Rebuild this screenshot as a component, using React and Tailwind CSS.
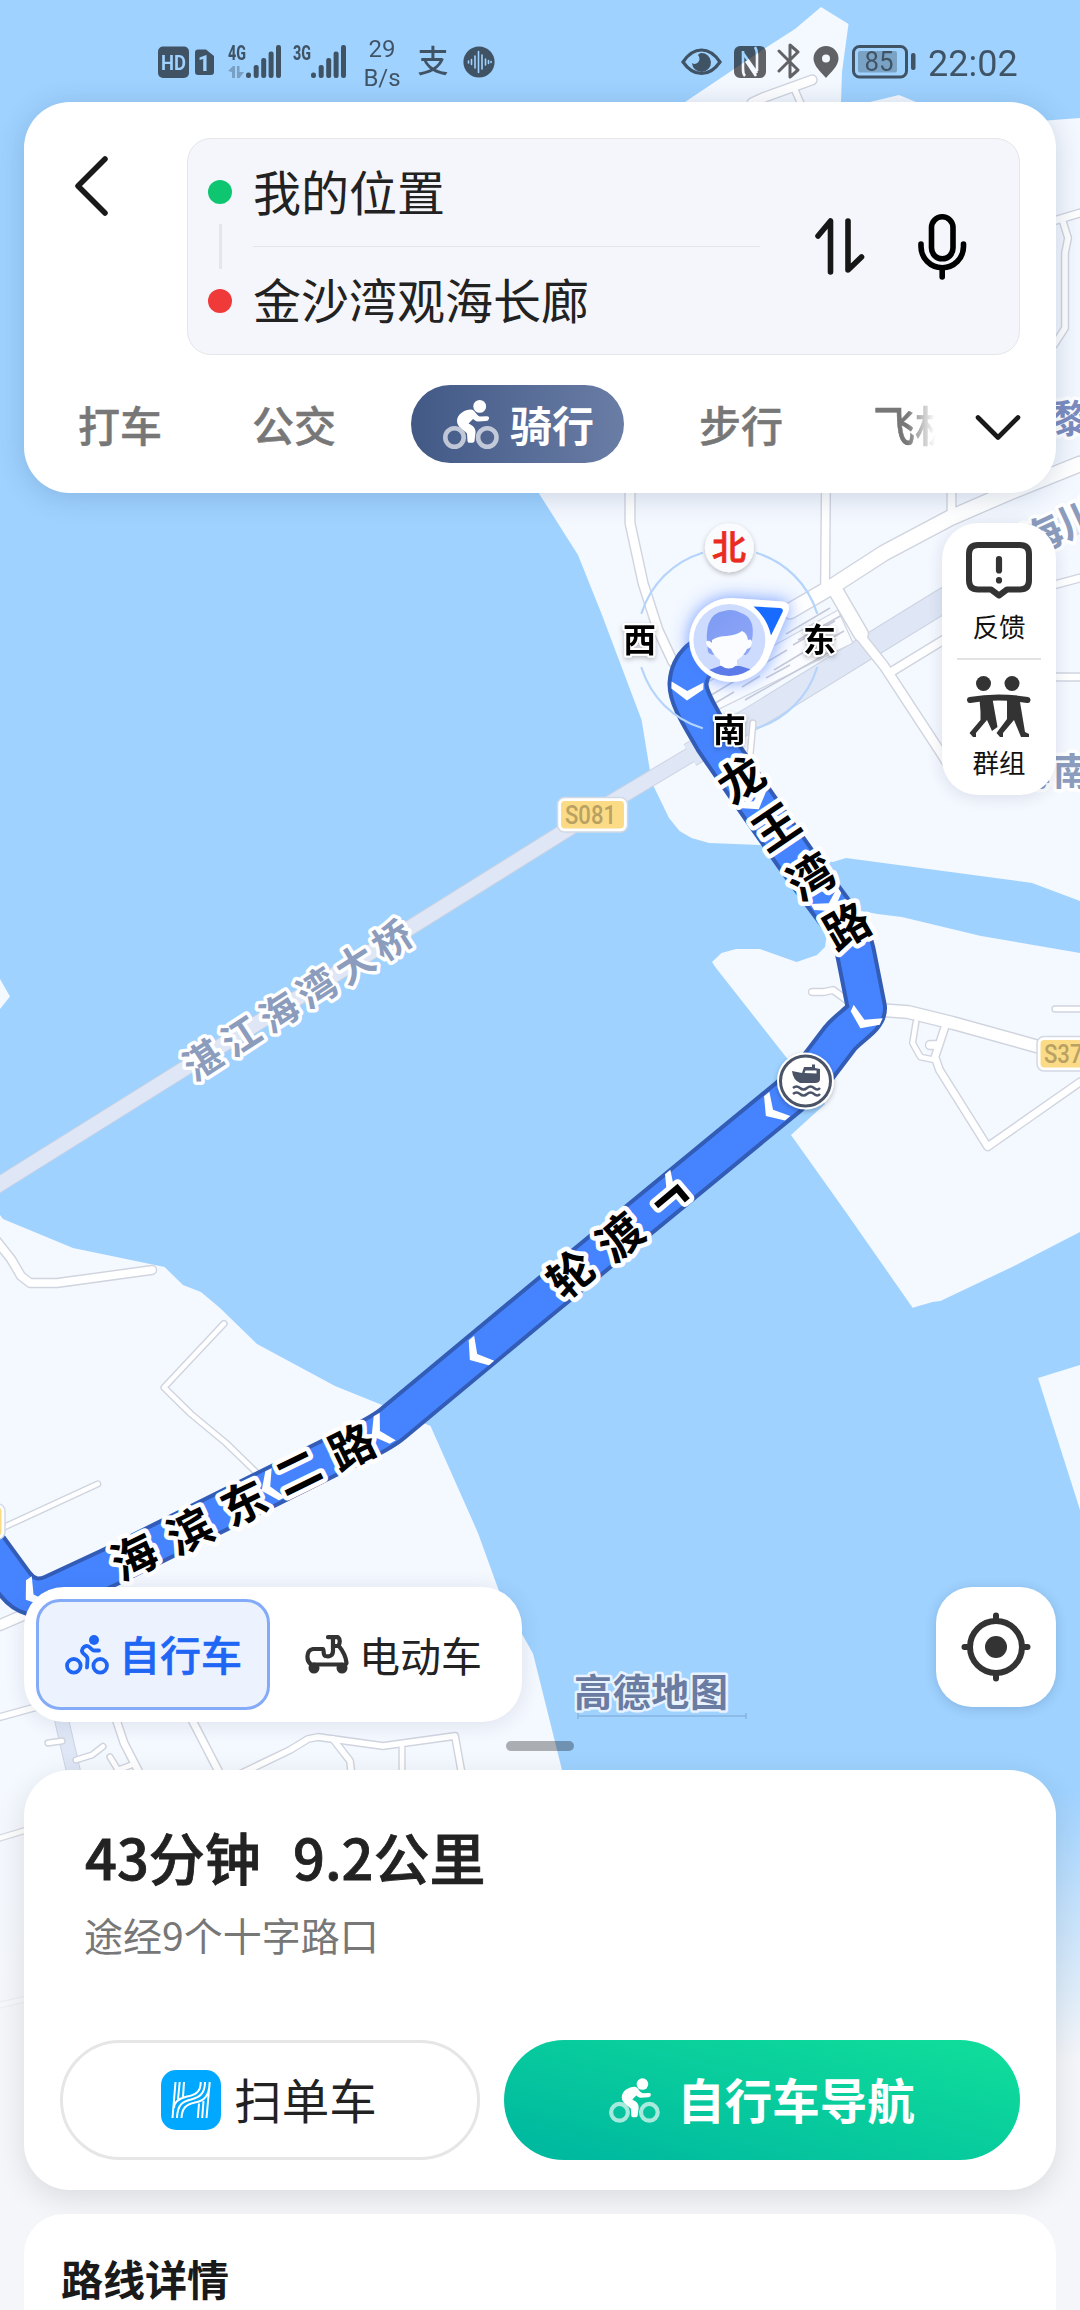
import React from "react";

const CJK = '"Noto Sans CJK SC", "Noto Sans", sans-serif';

const ROADS = [
  { w: 10, p: "752,103 765,97 812,80" },
  { w: 7, p: "794,88 801,104" },
  { w: 8, p: "1050,222 1080,213" },
  { w: 7, p: "1063,222 1068,238 1065,253 1065,328 1054,345" },
  { w: 10, p: "630,480 630,523 643,583 658,630 673,662" },
  { w: 9, p: "826,480 825,590" },
  { w: 9, p: "951.5,480 951.5,518" },
  { w: 16, p: "790,611 833,586 884,553 950,518 1010,492 1080,464" },
  { w: 15, p: "833,586 861,634" },
  { w: 10, p: "857,632 884,666 941,753 950,767" },
  { w: 9, p: "891,672 950,636" },
  { w: 8, p: "1050,586 1080,578" },
  { w: 8, p: "1050,677 1080,677" },
  { w: 6, p: "753,723 750,756" },
  { w: 13, p: "880,1010 908,1012 953,1023 1050,1050" },
  { w: 7, p: "812,992 824,992 833,990 848,1001" },
  { w: 6, p: "916,1022 912.6,1043 920.5,1057 935,1060" },
  { w: 9, p: "930,1045 938,1045" },
  { w: 8, p: "944.6,1028 935,1057 939.5,1070 987.7,1146.7 1080,1082" },
  { w: 6, p: "1055,1009 1080,1009" },
  { w: 9, p: "-4,1240 11,1259 21,1276 30,1283 57,1283 152,1270" },
  { w: 6, p: "224,1323.6 164,1387.5 191,1414 226,1443 260,1476" },
  { w: 6, p: "97.6,1484 0,1529" },
  { w: 11, p: "0,1625 35,1610" },
  { w: 7, p: "0,1717 40,1706" },
  { w: 8, p: "115,1716 124,1743 142,1778" },
  { w: 8, p: "190,1716 222,1778" },
  { w: 7, p: "240,1774 290,1750 308,1739 318,1737 383,1746 455,1736 462,1775" },
  { w: 7, p: "333,1739 350,1761 352,1778" },
  { w: 6, p: "402,1747 402,1778" },
  { w: 6, p: "48,1743 62,1741" },
  { w: 6, p: "76,1760 92,1755 103,1746.5" },
  { w: 6, p: "110,1757 118,1770 134,1764" },
  { w: 6, p: "0,1838 30,1829" },
  { w: 6, p: "0,2005 30,1998" },
];

const LAND = [
  "685,102 770,45 795,29 821,7 848.5,24 842,72 841,102",
  "870,102 899,95 916,102",
  "1040,121 1080,118 1080,901 1032,883 846,858 833,862 800,858 760,845 709,843 691.5,838 679.5,831 669,818 653,785 649.5,768 641.6,720 602,615 578,555 540,495 530,478 530,300 1040,300",
  "1080,953 981,936 902,917 877.5,914 856,910 827,920 827,933 825,947 817,955 796.5,962 760,949 736,949 721.5,953 712,962 716,968 786,1057 815,1090 825,1104 791,1135 846.5,1213 912.6,1307.7 932.6,1302 940.5,1301 1012,1267 1080,1232",
  "1038,1378 1080,1365 1080,1510",
  "0,1215 3,1219 73,1248 164.6,1267 183,1285 201,1292 220,1308 257,1344 335,1386 384.6,1406 430.5,1426 478,1533 498.6,1590 522,1634 533,1653.5 562,1770 575,1820 575,2310 0,2310",
  "0,979 10,996.5 0,1009",
];

const ROUTE =
  "M727 647 C704 651 689 664 688 684 C688 699 701 718 714 741 L758 805 L800 865 L834 911 C848 930 853 937 857 960 L866.5 1008 C867 1018 850 1026 840 1038 L821 1063 C812 1076 800 1087 787 1098 L540 1301 L392 1424 C380 1434 360 1443 345 1450 L110 1567 L52 1594 C38 1600 25 1597 15 1584 L-20 1536";

const CHEVRONS = [
  [687, 699, 92], [758, 808, 58], [833, 910, 58], [861, 1027, 115],
  [767, 1115, 139], [668, 1193, 139], [471, 1359, 141], [373, 1435, 150], [263, 1490, 155], [27, 1599, 145],
];

const LABELS = [
  { t: "龙", x: 741, y: 779, r: -34 }, { t: "王", x: 776, y: 827, r: -34 },
  { t: "湾", x: 811, y: 877, r: -32 }, { t: "路", x: 847, y: 926, r: -30 },
  { t: "轮", x: 571, y: 1274, r: -40 }, { t: "渡", x: 620, y: 1237, r: -40 },
  { t: "¬", x: 668, y: 1196, r: -40, s: 60 },
  { t: "海", x: 134, y: 1557, r: -26 }, { t: "滨", x: 190, y: 1531, r: -26 },
  { t: "东", x: 244, y: 1503, r: -26 }, { t: "二", x: 298, y: 1472, r: -26 },
  { t: "路", x: 352, y: 1447, r: -26 },
];

const BRIDGE = [
  { t: "湛", x: 203, y: 1060, r: -33 }, { t: "江", x: 241, y: 1036, r: -33 },
  { t: "海", x: 279, y: 1012, r: -33 }, { t: "湾", x: 317, y: 988, r: -33 },
  { t: "大", x: 355, y: 964, r: -33 }, { t: "桥", x: 392, y: 940, r: -33 },
  { t: "海", x: 1042, y: 535, r: -25, s: 40 }, { t: "川", x: 1078, y: 518, r: -25, s: 40 },
  { t: "南", x: 1072, y: 771, r: 0 }, { t: "海", x: 1032, y: 771, r: 0 }, { t: "黎", x: 1071, y: 418, r: 0, c: "#7c8cc0" },
];

function MapText({ t, x, y, r, size, fill, halo }) {
  return (
    <text
      transform={`translate(${x} ${y}) rotate(${r})`}
      y={size * 0.37}
      textAnchor="middle"
      fontFamily={CJK}
      fontSize={size}
      fontWeight="700"
      fill={fill}
      stroke="#fff"
      strokeWidth={halo}
      strokeLinejoin="round"
      paintOrder="stroke"
    >
      {t}
    </text>
  );
}

function RoadBadge({ x, y, w, h, t, tx, len }) {
  return (
    <g>
      <rect x={x} y={y} width={w} height={h} rx="7" fill="#fff" stroke="#d2d9e4" strokeWidth="1.5" />
      <rect x={x + 3.5} y={y + 3.5} width={w - 7} height={h - 7} rx="4" fill="#fbdb86" />
      {t && (
        <text x={tx} y={y + 26} fontFamily="Roboto, sans-serif" fontSize="25" fontWeight="500" fill="#b8a163" textLength={len} lengthAdjust="spacingAndGlyphs">
          {t}
        </text>
      )}
    </g>
  );
}

function MapCanvas() {
  const dirs = [
    { t: "西", x: 639.5, y: 639 },
    { t: "东", x: 819.6, y: 639 },
    { t: "南", x: 729.4, y: 729 },
  ];
  return (
    <svg className="absolute inset-0" width="1080" height="2310" viewBox="0 0 1080 2310">
      <defs>
        <linearGradient id="fade" x1="0" y1="0" x2="0" y2="1">
          <stop offset="0" stopColor="#f4f6f9" stopOpacity="0" />
          <stop offset="1" stopColor="#f4f6f9" />
        </linearGradient>
        <linearGradient id="hair" x1="0" y1="0" x2="1" y2="1">
          <stop offset="0" stopColor="#7d9bf3" />
          <stop offset="1" stopColor="#8fa6f8" />
        </linearGradient>
        <filter id="glow" x="-60%" y="-60%" width="220%" height="220%">
          <feDropShadow dx="0" dy="0" stdDeviation="9" floodColor="#3f78ff" floodOpacity="0.75" />
        </filter>
        <filter id="soft" x="-40%" y="-40%" width="180%" height="180%">
          <feDropShadow dx="0" dy="2" stdDeviation="2.5" floodColor="#000" floodOpacity="0.25" />
        </filter>
        <clipPath id="face"><circle cx="729.4" cy="640" r="36" /></clipPath>
      </defs>
      <rect width="1080" height="2310" fill="#9fd2ff" />
      {LAND.map((p) => <polygon key={p} points={p} fill="#f4f8ff" />)}

      <g fill="none" strokeLinecap="butt">
        <polyline points="-5,1187 600,809 697,751" stroke="#ccd3e3" strokeWidth="16" />
        <polyline points="690,755 756,716 941,602 1085,516" stroke="#ccd3e3" strokeWidth="25" />
        <polyline points="57,1700 75,1778" stroke="#ccd3e3" strokeWidth="15" />
        <polyline points="-5,1187 600,809 697,751" stroke="#dfe7f6" strokeWidth="14" />
        <polyline points="690,755 756,716 941,602 1085,516" stroke="#dfe7f6" strokeWidth="23" />
        <polyline points="57,1700 75,1778" stroke="#dfe7f6" strokeWidth="13" />
      </g>
      <path d="M690 692L838 610L853 643L713 712Z" fill="#fbfcff" stroke="#d0d4e1" strokeWidth="1.2" />
      <g stroke="#c6cad8" strokeWidth="1.5" fill="none">
        <path d="M708 697l30-18M745 675l42-25M793 645l42-24M712 705l22-13M742 687l18-11M766 678l24-13M774 670l30-18M806 656l30-17M786 634l44-26M798 640l44-25M745 700l90-51M812 649l32-18" />
      </g>
      <g fill="none" strokeLinejoin="round" strokeLinecap="round">
        {ROADS.map((r) => <polyline key={r.p} points={r.p} stroke="#d0d4df" strokeWidth={r.w + 1.4} />)}
        {ROADS.map((r) => <polyline key={r.p} points={r.p} stroke="#fff" strokeWidth={r.w - 1.4} />)}
      </g>

      <g fill="none" strokeLinejoin="round">
        <path d={ROUTE} stroke="#325cb5" strokeWidth="41" />
        <path d={ROUTE} stroke="#4684ff" strokeWidth="33" />
      </g>
      {CHEVRONS.map(([x, y, a]) => (
        <path key={`${x}`} transform={`translate(${x} ${y}) rotate(${a})`} d="M-10 -16L1.500 0L-10 16H-17L-8 0L-17 -16Z" fill="#fff" />
      ))}

      {BRIDGE.map((l) => <MapText key={`${l.x}`} {...l} size={l.s || 38} fill={l.c || "#8c9cbd"} halo={7} />)}
      {LABELS.map((l) => <MapText key={`${l.x}`} {...l} size={l.s || 45} fill="#000" halo={9} />)}

      <RoadBadge x={557.5} y={797.5} w={70} h={34.5} t="S081" tx={565} len={51} />
      <RoadBadge x={1037} y={1036.5} w={70} h={34.5} t="S373" tx={1044} len={51} />
      <RoadBadge x={-40} y={1504} w={45} h={35} />

      <g>
        <circle cx="805.5" cy="1081" r="28.5" fill="#fff" filter="url(#soft)" />
        <circle cx="805.5" cy="1081" r="25" fill="#fff" stroke="#4a5466" strokeWidth="3" />
        <path d="M792 1071L802 1073L804 1067H812V1064.5H815V1068L820 1069V1079Q820 1083 815 1083H800Q793 1080 792 1071Z" fill="#4a5466" />
        <path d="M805.5 1070.500H816.500V1073.500L804.500 1073Z" fill="#fff" />
        <path d="M793 1088q3.500-3 7 0t7 0t7 0t6 0M793 1094q3.500-3 7 0t7 0t7 0t6 0" fill="none" stroke="#4a5466" strokeWidth="2.5" />
      </g>

      <g fill="none" stroke="#b4d4fb" strokeWidth="2.2" strokeLinecap="round">
        <path d="M702 553A91.700 91.700 0 0 0 641.600 613M757 553A91.700 91.700 0 0 1 817 613M641.600 668A91.700 91.700 0 0 0 702 728M817 668A91.700 91.700 0 0 1 757 728" />
      </g>
      <g filter="url(#glow)">
        <path d="M731 598L782 601.500Q791 602.500 788.500 611L767 662A42 42 0 1 1 731 598Z" fill="#fff" />
      </g>
      <path d="M753.500 606.500L780 608Q784 608.500 782.500 612L771 635.500Q767 618 753.500 606.500Z" fill="#176bff" />
      <circle cx="729.4" cy="640" r="36" fill="#cddbfe" />
      <g clipPath="url(#face)">
        <path d="M709 670L720 666H740L753 670V680H706Z" fill="#5c7ae8" />
        <path d="M708 652Q702 614 724 611Q733 608 741 613Q756 618 752 640Q752 650 746 655L738 655H716Q710 655 708 652Z" fill="url(#hair)" />
        <path d="M712 640Q718 636 727 636Q737 635 742 631Q747 633 748 640Q752 638 752 643Q752 648 747 649Q744 656 737 660V665Q729 672 720 665V660Q714 656 711 649Q706 647 706 642Q708 639 712 643Z" fill="#fbfcff" />
      </g>
      <circle cx="729.4" cy="547.7" r="24.5" fill="#fafbfd" filter="url(#soft)" />
      <text x="729" y="560" textAnchor="middle" fontFamily={CJK} fontSize="34" fontWeight="500" fill="#ea2c20" stroke="#ea2c20" strokeWidth="0.8">北</text>
      {dirs.map((d) => (
        <text key={d.t} x={d.x} y={d.y + 12.5} textAnchor="middle" fontFamily={CJK} fontSize="33" fontWeight="700" fill="#000" stroke="#fff" strokeWidth="4" strokeLinejoin="round" paintOrder="stroke" filter="url(#soft)">{d.t}</text>
      ))}

      <text x="574" y="1706" fontFamily={CJK} fontSize="38" fontWeight="700" fill="#6b7ca3" stroke="#e8f3ff" strokeWidth="5" strokeLinejoin="round" paintOrder="stroke" textLength="154">高德地图</text>
      <path d="M578 1713v6M746 1713v6M578 1716h168" stroke="#88b4df" strokeWidth="1.500" fill="none" />

      <rect y="1790" width="1080" height="270" fill="url(#fade)" />
      <rect y="2059" width="1080" height="251" fill="#f4f6f9" />
    </svg>
  );
}

function SignalBars() {
  return (
    <svg width="35" height="34" viewBox="0 0 35 34" fill="currentColor">
      <rect x="0" y="27.500" width="5" height="5.500" rx="2.200" />
      <rect x="7.700" y="20" width="5" height="13" rx="2.200" />
      <rect x="15.200" y="13" width="5" height="20" rx="2.200" />
      <rect x="22.600" y="6.500" width="5" height="26.500" rx="2.200" />
      <rect x="30" y="0" width="5" height="33" rx="2.200" />
    </svg>
  );
}

function StatusBar() {
  return (
    <div className="flex h-[102px] shrink-0 items-start pt-[45px] pl-[158px] text-black opacity-60 font-[Roboto,'Noto_Sans_CJK_SC',sans-serif]">
      <svg width="31" height="33" viewBox="0 0 31 33" className="shrink-0">
        <mask id="hd"><rect width="31" height="33" fill="#fff" /><text x="15.500" y="25" textAnchor="middle" fontFamily="Roboto" fontWeight="700" fontSize="21" textLength="25" lengthAdjust="spacingAndGlyphs" fill="#000">HD</text></mask>
        <rect y="1.500" width="31" height="31.500" rx="5" fill="currentColor" mask="url(#hd)" />
      </svg>
      <svg width="19" height="33" viewBox="0 0 19 33" className="ml-[6px] shrink-0">
        <mask id="sim"><rect width="19" height="33" fill="#fff" /><text x="9" y="25.500" textAnchor="middle" fontFamily="Roboto" fontWeight="800" fontSize="22" fill="#000">1</text></mask>
        <path d="M3 4.500H11L19 11V27Q19 30 16 30H3Q0 30 0 27V7.500Q0 4.500 3 4.500Z" fill="currentColor" mask="url(#sim)" />
      </svg>
      <div className="ml-[14px] flex w-[53px] shrink-0 justify-between">
        <div className="w-[18px]">
          <svg width="20" height="34" viewBox="0 0 20 34" fill="currentColor">
            <text x="0" y="15" fontFamily="Roboto" fontWeight="800" fontSize="20" textLength="18" lengthAdjust="spacingAndGlyphs">4G</text>
            <path d="M0 26L5 21H7V33H4V27ZM9 21H11.500V27H16L11.500 33H9Z" opacity="0.400" />
          </svg>
        </div>
        <SignalBars />
      </div>
      <div className="ml-[12px] flex w-[53px] shrink-0 justify-between">
        <div className="w-[18px]">
          <svg width="20" height="34" viewBox="0 0 20 34" fill="currentColor">
            <text x="0" y="15" fontFamily="Roboto" fontWeight="800" fontSize="20" textLength="18" lengthAdjust="spacingAndGlyphs">3G</text>
          </svg>
        </div>
        <SignalBars />
      </div>
      <div className="-mt-[10px] ml-[16px] w-[40px] shrink-0 text-center text-[24px] leading-[28.5px]">
        <div>29</div>
        <div>B/s</div>
      </div>
      <div className="mt-[1px] ml-[13px] w-[36px] shrink-0 text-center text-[31px] leading-[32px] font-medium">支</div>
      <svg width="32" height="34" viewBox="0 0 32 34" className="ml-[12px] shrink-0">
        <mask id="wave"><rect width="32" height="34" fill="#fff" /><path d="M5.500 16v2M8.500 14.500v5M12 11v12M15.500 6.500v21M19 10v14M22.500 14v6M25.500 15.500v3M28 16.500v1" stroke="#000" strokeWidth="1.600" strokeLinecap="round" /></mask>
        <circle cx="16" cy="17" r="15.600" fill="currentColor" mask="url(#wave)" />
      </svg>
      <svg width="41" height="34" viewBox="0 0 41 34" className="ml-[186px] shrink-0">
        <path d="M2 17Q10 5 20.500 5T39 17Q31 28.500 20.500 28.500T2 17Z" fill="none" stroke="currentColor" strokeWidth="3.200" />
        <path d="M20 8A9.500 9.500 0 1 1 11 18Q14 20 17 17.500Q20 14 17 10Q18 8.500 20 8Z" fill="currentColor" />
      </svg>
      <svg width="32" height="34" viewBox="0 0 32 34" className="ml-[12px] shrink-0">
        <mask id="nfc"><rect width="32" height="34" fill="#fff" /><path d="M9 6V24Q9 29 11 31M9 8L23 28M23 26V10Q23 5 21 2M12 16L22 31" fill="none" stroke="#000" strokeWidth="2.600" /></mask>
        <rect y="1" width="32" height="32" rx="6" fill="currentColor" mask="url(#nfc)" />
      </svg>
      <svg width="24" height="38" viewBox="0 0 24 38" className="-mt-[3px] ml-[11px] shrink-0">
        <path d="M2 9L21 28L13 35V3L21 10L2 29" fill="none" stroke="currentColor" strokeWidth="3" strokeLinejoin="round" strokeLinecap="round" />
      </svg>
      <svg width="26" height="34" viewBox="0 0 26 34" className="ml-[12px] shrink-0">
        <path fillRule="evenodd" d="M13 1A12.500 12.500 0 0 1 25.500 13.500C25.500 21 18 27 13 33C8 27 .5 21 .5 13.500A12.500 12.500 0 0 1 13 1ZM13 9.500A4 4 0 1 0 13 17.500A4 4 0 1 0 13 9.500Z" fill="currentColor" />
      </svg>
      <svg width="64" height="34" viewBox="0 0 64 34" className="ml-[13px] shrink-0">
        <rect x="1.500" y="1.500" width="53" height="30.500" rx="6" fill="none" stroke="currentColor" strokeWidth="3" />
        <rect x="6" y="6" width="39" height="21.500" rx="2" fill="currentColor" opacity="0.380" />
        <rect x="59" y="8" width="4.500" height="17" rx="2" fill="currentColor" />
        <text x="27" y="26" textAnchor="middle" fontFamily="Roboto" fontSize="27" textLength="29" lengthAdjust="spacingAndGlyphs" fill="currentColor">85</text>
      </svg>
      <div className="ml-[12px] shrink-0 text-[36px] leading-[38px]">22:02</div>
    </div>
  );
}

function Cyclist({ className, wheel = "rgba(255,255,255,0.65)" }) {
  return (
    <svg viewBox="0 0 56 49" className={className}>
      <circle cx="11.500" cy="37.500" r="9.200" fill="none" stroke={wheel} strokeWidth="4.600" />
      <circle cx="44.300" cy="37.500" r="9.200" fill="none" stroke={wheel} strokeWidth="4.600" />
      <circle cx="36.700" cy="6.400" r="6.400" fill="#fff" />
      <path d="M14 21C14 14 22 9.500 28 9.500C32 9.500 33 15.500 37 16.500L44 16.300Q46.500 16.500 46 18.500Q45.500 21 43 21L35 21.500C32.500 21.300 31.500 20 30 19L25.500 23.500C31 26 33 29 32.500 33L31.500 41Q31.300 42.800 29.500 42.800H26Q24.500 42.800 24.500 41L24 33.500C20 29 14 27 14 21Z" fill="#fff" />
    </svg>
  );
}

function CyclistOutline() {
  return (
    <svg viewBox="0 0 44 40" className="h-10 w-11" fill="none" stroke="#1f66f5" strokeWidth="3.800" strokeLinecap="round" strokeLinejoin="round">
      <circle cx="8.800" cy="30.800" r="6.800" />
      <circle cx="35.200" cy="30.800" r="6.800" />
      <circle cx="29" cy="5" r="5" fill="#1f66f5" stroke="none" />
      <path d="M34 15.500H29C26 15.500 25 10.500 21.500 11C18 11.500 16 15 17.500 17.500C19 20 23 20.500 22.500 24.500L22 32.500" />
    </svg>
  );
}

function Scooter() {
  return (
    <svg viewBox="0 0 44 39" className="h-[39px] w-11" fill="none" stroke="#333" strokeWidth="4.200" strokeLinecap="round" strokeLinejoin="round">
      <path d="M23 2.200H33C35.500 4 35 8.500 33.500 10.500C38 16 41 22 41.500 28C41 30 38 30 35 29.500H6C1 26 1 15 8 14H18C19.500 16 17.500 20 20.500 21C24 22 28 21 28 16V3M33 11H29" />
      <circle cx="9" cy="33" r="5.500" fill="#333" stroke="none" />
      <circle cx="37" cy="33" r="5.500" fill="#333" stroke="none" />
    </svg>
  );
}

function HeaderCard() {
  return (
    <div className="mx-6 h-[391px] shrink-0 rounded-[46px] bg-white pt-9 shadow-[0_4px_28px_rgba(40,70,110,0.2)]">
      <div className="flex h-[217px]">
        <svg width="36" height="62" viewBox="0 0 36 62" className="mt-[17px] ml-[50px] shrink-0">
          <path d="M31 4L4 31L31 58" fill="none" stroke="#1a1a1a" strokeWidth="5.500" strokeLinecap="round" strokeLinejoin="round" />
        </svg>
        <div className="mr-9 ml-[77px] flex flex-1 items-center rounded-[24px] border border-[#e4e6ea] bg-[#f4f6fb] pl-5">
          <div className="flex w-6 flex-col items-center">
            <div className="size-6 rounded-full bg-[#0fc670]" />
            <div className="my-5 h-[45px] w-[3px] bg-[#e4e6ea]" />
            <div className="size-6 rounded-full bg-[#f03a3a]" />
          </div>
          <div className="ml-[21px] w-[507px] text-[48px] leading-[103px] text-[#222]">
            <div className="h-[108px] border-b border-[#e3e5e9]">我的位置</div>
            <div className="h-[107px]">金沙湾观海长廊</div>
          </div>
          <svg width="50" height="58" viewBox="0 0 50 58" className="-mt-[2px] ml-[55px] shrink-0">
            <path d="M3 19L15.500 4V55M33 4V53L46.500 40" fill="none" stroke="#171717" strokeWidth="5.600" strokeLinecap="round" strokeLinejoin="round" />
          </svg>
          <svg width="49" height="66" viewBox="0 0 49 66" className="ml-[53px] shrink-0">
            <rect x="13.500" y="2.800" width="21.500" height="42" rx="10.700" fill="none" stroke="#000" strokeWidth="5.600" />
            <path d="M3 30V32.500A21.200 21.200 0 0 0 45.500 32.500V30M24.200 54V63" fill="none" stroke="#000" strokeWidth="5.600" strokeLinecap="round" />
          </svg>
        </div>
      </div>
      <div className="mt-[30px] flex h-[78px] items-center pl-[54px] text-[42px] leading-none font-medium text-[#777] [-webkit-text-stroke:0.5px_currentColor]">
        <div className="w-[174px] shrink-0">打车</div>
        <div className="w-[159px] shrink-0">公交</div>
        <div className="flex h-[78px] w-[213px] shrink-0 items-center rounded-full bg-linear-to-r from-[#425986] to-[#6a7da5] pl-8 text-white">
          <Cyclist className="h-[49px] w-14" />
          <span className="ml-[11px] font-bold [-webkit-text-stroke:0px]">骑行</span>
        </div>
        <div className="ml-[75px] w-[174px] shrink-0">步行</div>
        <div className="h-[50px] w-[62px] shrink-0 overflow-hidden leading-[50px] whitespace-nowrap mask-r-from-55% mask-r-to-100%">飞机</div>
        <svg width="48" height="28" viewBox="0 0 48 28" className="mt-[8px] ml-[39px] shrink-0">
          <path d="M4 3.500L24 23.500L44 3.500" fill="none" stroke="#1a1a1a" strokeWidth="4.600" strokeLinecap="round" strokeLinejoin="round" />
        </svg>
      </div>
    </div>
  );
}

function SidePanel() {
  return (
    <div className="mt-[30px] mr-[24px] flex h-[272px] w-[114px] shrink-0 flex-col items-center self-end rounded-[36px] bg-white pt-[19px] text-[26.5px] leading-[30px] text-[#111] shadow-[0_2px_16px_rgba(40,60,100,0.14)]">
      <svg width="66" height="57" viewBox="0 0 66 57">
        <path d="M12 3H54Q63 3 63 12V38Q63 47.500 54 47.500H41L33 53.500L25 47.500H12Q3 47.500 3 38V12Q3 3 12 3Z" fill="none" stroke="#333" strokeWidth="6" strokeLinejoin="round" />
        <path d="M33 17V28.500M33 38V38.500" stroke="#333" strokeWidth="6.200" strokeLinecap="round" />
      </svg>
      <div className="mt-[12px]">反馈</div>
      <div className="mt-[17px] h-[2px] w-[84px] shrink-0 bg-[#e3e3e3]" />
      <svg width="64" height="62" viewBox="0 0 64 62" className="mt-4" fill="#333">
        <circle cx="16.500" cy="7.500" r="7.500" />
        <circle cx="45" cy="7.500" r="7.500" />
        <path d="M3 24Q31 19 60.500 24" fill="none" stroke="#333" strokeWidth="6" strokeLinecap="round" />
        <path d="M12.500 23H25.500L30.500 51L25 55L20 44L9 57V61H6L2.500 57L13.500 44V36Z" />
        <path d="M40 23H52.500L58 56L62 58V61H54L47 44L36 57V61H33L29.500 57L40 43Z" />
      </svg>
      <div className="mt-[9px]">群组</div>
    </div>
  );
}

export default function App() {
  return (
    <div className="relative h-[2310px] w-[1080px] overflow-hidden font-['Noto_Sans_CJK_SC',sans-serif]">
      <MapCanvas />
      <div className="relative flex h-full flex-col">
        <StatusBar />
        <HeaderCard />
        <SidePanel />
        <div className="mx-6 mt-[792px] flex h-[135px] shrink-0 items-start justify-between">
          <div className="flex h-[135px] w-[498px] items-center rounded-[40px] bg-white pl-[12px] shadow-[0_2px_20px_rgba(40,60,100,0.12)]">
            <div className="flex h-[111px] w-[234px] items-center rounded-[24px] border-[3px] border-[#84abf7] bg-[#ecf3ff] pl-[26px] text-[41px] leading-none font-medium text-[#1f66f5]">
              <CyclistOutline />
              <span className="-mt-[2px] ml-[10px] [-webkit-text-stroke:0.6px_currentColor]">自行车</span>
            </div>
            <div className="ml-[35px] flex items-center text-[41px] leading-none text-[#222]">
              <Scooter />
              <span className="ml-[10px]">电动车</span>
            </div>
          </div>
          <div className="flex size-[120px] items-center justify-center rounded-[36px] bg-white shadow-[0_2px_12px_rgba(40,60,100,0.2)]">
            <svg width="70" height="70" viewBox="0 0 70 70">
              <circle cx="35" cy="35" r="26" fill="none" stroke="#333" strokeWidth="6" />
              <circle cx="35" cy="35" r="11" fill="#333" />
              <path d="M35 3.500V9M35 61V66.500M3.500 35H9M61 35H66.500" stroke="#333" strokeWidth="6" strokeLinecap="round" />
            </svg>
          </div>
        </div>
        <div className="mt-[19px] h-[10px] w-[68px] shrink-0 self-center rounded-full bg-black/30" />
        <div className="mx-6 mt-[19px] h-[420px] shrink-0 rounded-[46px] bg-white px-9 pt-[51px] shadow-[0_8px_30px_rgba(0,0,0,0.11)]">
          <div className="flex pl-[25px] text-[56px] leading-[70px] font-medium text-[#222] [-webkit-text-stroke:0.8px_currentColor]">
            <span className="w-[208px]">43分钟</span>
            <span>9.2公里</span>
          </div>
          <div className="mt-[18px] pl-[24px] text-[39px] leading-[50px] text-[#777]">途经9个十字路口</div>
          <div className="mt-[81px] flex gap-6">
            <div className="flex h-[120px] w-[420px] items-center justify-center rounded-full border-[3px] border-[#e6e6e6] text-[47.5px] leading-none text-[#222]">
              <svg width="60" height="60" viewBox="0 0 60 60" className="-ml-[2px]">
                <rect width="60" height="60" rx="15" fill="#00a9ff" />
                <g fill="none" stroke="#fff" strokeWidth="2">
                  <path d="M14.500 12L11.500 48M18.700 12L17 29.500M23 12L22 27M39.700 12C40 22 34 25 26 26.500C18 28.500 13 32 13 38M44 12C44 24 38 27.500 30 29.500C21 31.500 16.500 35 16 48M48.700 12C48.500 27 42 31 34 32.500C25 34.500 21 38 20.500 48M48.700 12L45.500 48M42.500 31L41.200 48M38 33.500L36.800 48" />
                </g>
              </svg>
              <span className="-mt-[3px] ml-[13px]">扫单车</span>
            </div>
            <div className="flex h-[120px] flex-1 items-center justify-center rounded-full bg-linear-[15deg] from-[#00ba9f] from-10% to-[#0fdb9b] to-90% text-[47.5px] leading-none font-bold text-white">
              <Cyclist className="h-[45px] w-[51px]" />
              <span className="-mt-[2px] ml-[17px]">自行车导航</span>
            </div>
          </div>
        </div>
        <div className="mx-6 mt-6 h-[160px] shrink-0 rounded-[40px] bg-white px-[37px] pt-[39px] text-[42px] leading-[50px] font-bold text-[#1a1a1a]">路线详情</div>
      </div>
    </div>
  );
}
